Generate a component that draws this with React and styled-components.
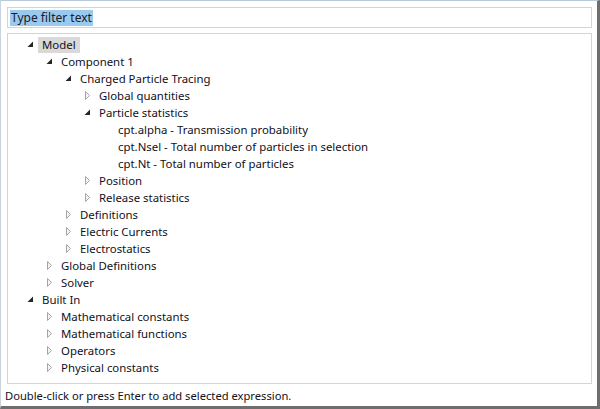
import React from 'react'
import styled, { createGlobalStyle } from 'styled-components'

const GlobalStyle = createGlobalStyle`
  html, body { margin: 0; padding: 0; background: #ffffff; }
  body { font-family: "Noto Sans", "Open Sans", sans-serif; }
`;

const tree = [
  {
    label: 'Model', open: true, selected: true, children: [
      {
        label: 'Component 1', open: true, children: [
          {
            label: 'Charged Particle Tracing', open: true, children: [
              { label: 'Global quantities', children: [] },
              {
                label: 'Particle statistics', open: true, children: [
                  { label: 'cpt.alpha - Transmission probability' },
                  { label: 'cpt.Nsel - Total number of particles in selection' },
                  { label: 'cpt.Nt - Total number of particles' },
                ]
              },
              { label: 'Position', children: [] },
              { label: 'Release statistics', children: [] },
            ]
          },
          { label: 'Definitions', children: [] },
          { label: 'Electric Currents', children: [] },
          { label: 'Electrostatics', children: [] },
        ]
      },
      { label: 'Global Definitions', children: [] },
      { label: 'Solver', children: [] },
    ]
  },
  {
    label: 'Built In', open: true, children: [
      { label: 'Mathematical constants', children: [] },
      { label: 'Mathematical functions', children: [] },
      { label: 'Operators', children: [] },
      { label: 'Physical constants', children: [] },
    ]
  },
];

const Window = styled.div`
  box-sizing: border-box;
  width: 600px;
  height: 409px;
  display: flex;
  flex-direction: column;
  background: #ffffff;
  border-top: 1px solid #b9c9d9;
  border-left: 1px solid #c9d3dd;
  border-right: 3px solid #6e6e6e;
  border-bottom: 3px solid #6e6e6e;
  padding: 6px 5px 0 6px;
  font-size: 11.4px;
  color: #111122;
`;

const FilterBox = styled.div`
  box-sizing: border-box;
  height: 21px;
  border: 1px solid #d4d4d4;
  padding: 1px 2px;
  display: flex;
  align-items: center;
`;

const Selected = styled.span`
  background: #99c9ef;
  line-height: 16px;
  padding: 0 1px;
  color: #1a1a2a;
  font-size: 12px;
`;

const TreeBox = styled.div`
  box-sizing: border-box;
  margin-top: 5px;
  height: 351px;
  border: 1px solid #d4d4d4;
  padding-top: 2px;
`;

const Row = styled.div`
  height: 17px;
  display: flex;
  align-items: center;
  padding-left: ${p => 19 + p.$level * 19}px;
`;

const Expander = styled.span`
  width: 11px;
  height: 17px;
  flex: none;
  display: flex;
  align-items: center;
`;

const Label = styled.span`
  line-height: 16px;
  padding: 0 4px;
  white-space: nowrap;
  background: ${p => (p.$selected ? '#d9d9d9' : 'transparent')};
`;

const Status = styled.div`
  flex: 1;
  display: flex;
  align-items: center;
  margin-left: -2px;
  font-size: 11.2px;
`;

function Arrow({ open }) {
  if (open) {
    return (
      <svg width="7" height="7" viewBox="0 0 7 7">
        <polygon points="6,0.5 6,6 0.5,6" fill="#262626" />
      </svg>
    );
  }
  return (
    <svg width="7" height="9" viewBox="0 0 7 9">
      <polygon points="1.5,0.5 5.5,4.5 1.5,8.5" fill="#f4f4f4" stroke="#a6a6a6" strokeWidth="1" />
    </svg>
  );
}

function Node({ node, level }) {
  const hasKids = Array.isArray(node.children);
  return (
    <>
      <Row $level={level}>
        <Expander>{hasKids && <Arrow open={node.open} />}</Expander>
        <Label $selected={node.selected}>{node.label}</Label>
      </Row>
      {node.open && node.children.map((c, i) => <Node key={i} node={c} level={level + 1} />)}
    </>
  );
}

export default function App() {
  return (
    <>
      <GlobalStyle />
      <Window>
        <FilterBox>
          <Selected>Type filter text</Selected>
        </FilterBox>
        <TreeBox>
          {tree.map((n, i) => <Node key={i} node={n} level={0} />)}
        </TreeBox>
        <Status>Double-click or press Enter to add selected expression.</Status>
      </Window>
    </>
  );
}
